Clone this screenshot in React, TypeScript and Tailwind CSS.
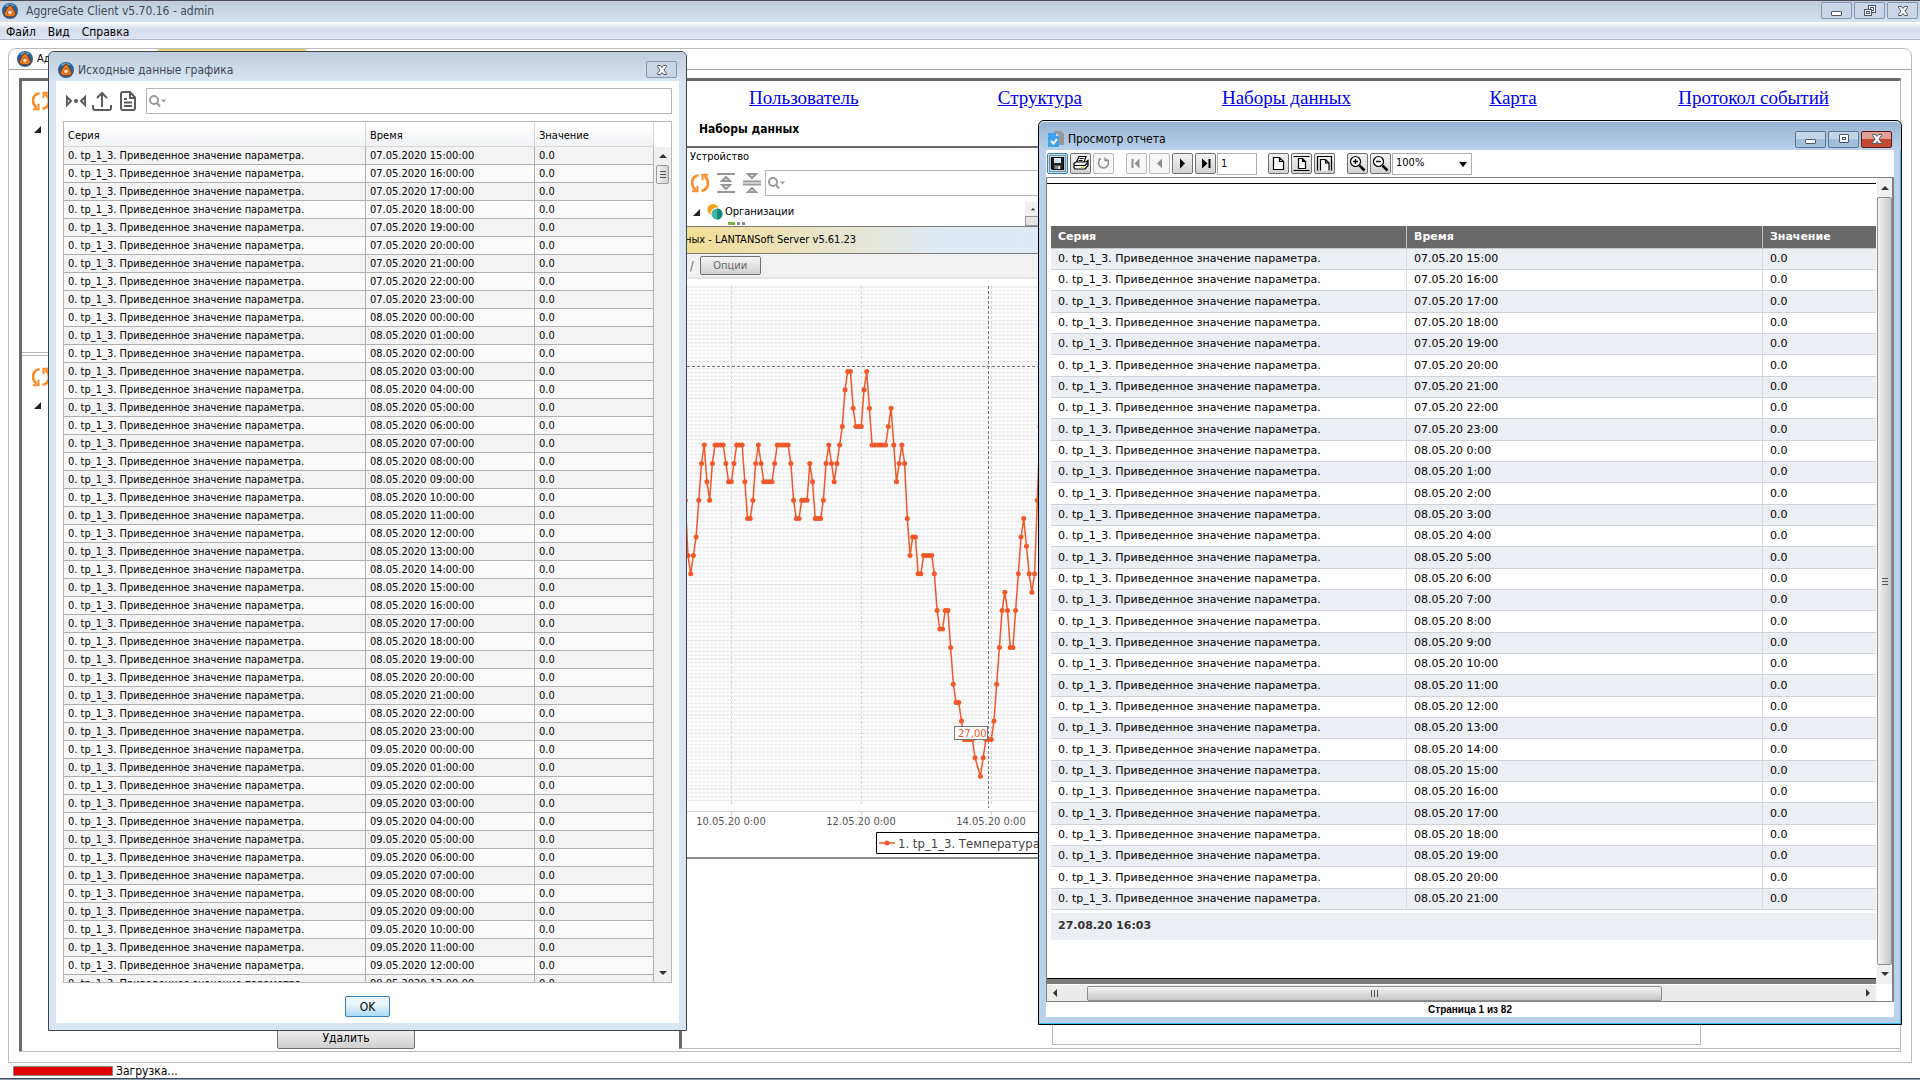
import React from "react";

const SERIES = "0. tp_1_3. Приведенное значение параметра.";
const pad = (n: number) => String(n).padStart(2, "0");
const UI = "font-['DejaVu_Sans_Condensed','DejaVu_Sans',sans-serif]";

const sourceRows = Array.from({ length: 47 }, (_, i) => {
  const h = i + 15;
  return `${pad(7 + Math.floor(h / 24))}.05.2020 ${pad(h % 24)}:00:00`;
});
const reportRows = Array.from({ length: 31 }, (_, i) => {
  const h = i + 15;
  return `${pad(7 + Math.floor(h / 24))}.05.20 ${h % 24}:00`;
});

/* Hour offset from 10.05.20 0:00 and the step below the series maximum */
const runs: [number, number, number][] = [
  [-17, -17, 7], [-16, -16, 10], [-15, -15, 11], [-14, -14, 10], [-13, -13, 9], [-12, -12, 7], [-11, -11, 5],
  [-10, -10, 4], [-9, -9, 6], [-8, -8, 7], [-7, -7, 5], [-6, -3, 4], [-2, -2, 5], [-1, 0, 6], [1, 1, 5],
  [2, 4, 4], [5, 5, 6], [6, 7, 8], [8, 8, 7], [9, 9, 5], [10, 10, 4], [11, 11, 5], [12, 15, 6], [16, 16, 5],
  [17, 21, 4], [22, 22, 5], [23, 23, 7], [24, 25, 8], [26, 28, 7], [29, 29, 5], [30, 30, 6], [31, 33, 8],
  [34, 34, 7], [35, 35, 5], [36, 36, 4], [37, 37, 5], [38, 38, 6], [39, 39, 5], [40, 40, 4], [41, 41, 3],
  [42, 42, 1], [43, 44, 0], [45, 45, 2], [46, 48, 3], [49, 49, 1], [50, 50, 0], [51, 51, 2], [52, 57, 4],
  [58, 58, 3], [59, 59, 2], [60, 60, 4], [61, 61, 6], [62, 62, 5], [63, 63, 4], [64, 64, 5], [65, 65, 8],
  [66, 66, 10], [67, 68, 9], [69, 70, 11], [71, 74, 10], [75, 75, 11], [76, 76, 13], [77, 78, 14], [79, 80, 13],
  [81, 81, 15], [82, 82, 17], [83, 84, 18], [85, 85, 19], [86, 89, 20], [90, 90, 21], [92, 92, 22], [93, 93, 21],
  [94, 96, 20], [97, 97, 19], [98, 98, 17], [99, 99, 15], [100, 100, 13], [101, 101, 12], [102, 102, 13],
  [103, 104, 15], [105, 105, 13], [106, 106, 11], [107, 107, 9], [108, 108, 8], [109, 109, 9.5],
  [110, 110, 11], [111, 111, 12], [112, 112, 11], [113, 113, 7], [114, 114, 3],
];
const points = runs.flatMap(([a, b, k]) =>
  Array.from({ length: b - a + 1 }, (_, i) => [49.3 + (a + i) * 2.708, 93.4 + k * 18.4]),
);

function Logo({ className = "size-4" }: { className?: string }) {
  return (
    <svg viewBox="0 0 16 16" className={className} aria-hidden="true">
      <circle cx="8" cy="8" r="8" fill="#2c5f92" />
      <path d="M2.500 3a7.500 7.500 0 0 1 10-.5L9 5z" fill="#4ba3d6" />
      <path d="M8 1.500c1.500 0 6.500 8.500 6 10.500-1 2.500-11 2.500-12 0C1.500 10 6.500 1.500 8 1.500z" fill="#9b3511" />
      <path d="M8 3c1.200 0 5.200 7 5 8.500-.8 2-9.200 2-10 0C2.800 10 6.800 3 8 3z" fill="#ee8420" />
      <path d="M8 5.500c.8 0 3.200 4 3 5.200-.5 1.300-5.500 1.300-6 0-.2-1.200 2.200-5.200 3-5.200z" fill="#c65a12" />
      <circle cx="8" cy="9.400" r="1.900" fill="#f9dcb4" />
    </svg>
  );
}

function Refresh() {
  return (
    <svg viewBox="0 0 18 20" className="h-5 w-[18px] shrink-0" fill="none" stroke="#ff8a24" strokeWidth="2.6" aria-hidden="true">
      <path d="M7.5 2.2C-.5 3.5-.5 13 4.6 17" />
      <path d="M10.500 17.800C18.500 16.500 18.500 7 13.400 3" />
      <path d="M1 18.200h5.500v-5.500M17 1.800h-5.500v5.500" strokeWidth="2" />
    </svg>
  );
}

function Search() {
  return (
    <svg viewBox="0 0 18 12" className="absolute top-[7px] left-[3px] h-3 w-[18px]" fill="none" stroke="#9a9a9a" strokeWidth="2" aria-hidden="true">
      <circle cx="5" cy="5" r="4" />
      <path d="m8 8 3 3.500" />
      <path d="M12 4.500h5l-2.500 3z" fill="#9a9a9a" stroke="none" />
    </svg>
  );
}

function Arrow({ dir }: { dir: "up" | "down" | "left" | "right" }) {
  const d = { up: "M0 6 4 2l4 4z", down: "M0 2h8L4 6z", left: "M6 0v8L2 4z", right: "M2 0v8l4-4z" }[dir];
  return (
    <svg viewBox="0 0 8 8" className="size-2" aria-hidden="true">
      <path d={d} fill="#333" />
    </svg>
  );
}

function Branch() {
  return (
    <svg viewBox="0 0 7 7" className="size-[7px]" aria-hidden="true">
      <path d="M7 0v7H0z" fill="#222" />
    </svg>
  );
}

function Glyph({ kind }: { kind: "min" | "max" | "restore" | "close" }) {
  return (
    <svg viewBox="0 0 14 12" className="h-3 w-[14px]" fill="none" stroke="#4d566b" strokeWidth="1" aria-hidden="true">
      {kind === "min" && <rect x="1.500" y="6.500" width="10" height="4" rx=".5" fill="#fff" />}
      {kind === "max" && (
        <>
          <rect x="2.500" y="1.500" width="9" height="8" rx=".5" fill="#fff" />
          <rect x="5.500" y="4.500" width="3" height="2" />
        </>
      )}
      {kind === "restore" && (
        <>
          <rect x="5.500" y=".5" width="7" height="7" fill="#fff" />
          <rect x="7.500" y="2.500" width="3" height="3" />
          <rect x="1.500" y="4.500" width="7" height="6" fill="#fff" />
          <rect x="3.500" y="6.500" width="3" height="2" />
        </>
      )}
      {kind === "close" && (
        <path d="M2.500 1.500h3L7 3.500l1.500-2h3v1L9 6l2.500 3.500v1h-3L7 8.500l-1.500 2h-3v-1L5 6 2.500 2.500z" fill="#fff" />
      )}
    </svg>
  );
}

function WinButton({ kind, label, tone = "pale" }: { kind: "min" | "max" | "restore" | "close"; label: string; tone?: "pale" | "blue" | "red" }) {
  const tones = {
    pale: "border-[#8595b3] bg-[#c8d6e5]",
    blue: "border-[#5a7596] bg-linear-to-b from-[#c3d5e9] from-50% to-[#a3bedb] to-50%",
    red: "border-[#5b1a1c] bg-linear-to-b from-[#e0a095] from-50% to-[#c24a33] to-50%",
  };
  return (
    <button aria-label={label} className={`flex h-[17px] w-[31px] items-center justify-center rounded-xs border ${tones[tone]}`}>
      <Glyph kind={kind} />
    </button>
  );
}

function Grip({ vertical = false }: { vertical?: boolean }) {
  return (
    <span className={`flex gap-[2px] ${vertical ? "flex-col" : ""}`}>
      {[0, 1, 2].map((i) => (
        <span key={i} className={vertical ? "h-px w-[6px] bg-[#555]" : "h-[7px] w-px bg-[#555]"} />
      ))}
    </span>
  );
}

function SourceWindow() {
  return (
    <section aria-label="Исходные данные графика" className="absolute top-[51px] left-12 flex h-[980px] w-[639px] flex-col rounded-t-md border border-[#3f4550] bg-[#d7e4f1] px-[7px] pb-[7px]">
      <header className="-mx-[7px] flex h-[29px] shrink-0 items-center rounded-t-md bg-linear-to-b from-[#bfcddc] to-[#d7e4f1] px-[9px] pt-[6px]">
        <Logo />
        <h2 className="ml-1 flex-1 text-xs text-[#3f4a5a]">Исходные данные графика</h2>
        <WinButton kind="close" label="Закрыть" />
      </header>
      <div className="flex min-h-0 flex-1 flex-col bg-white px-[7px] pt-[7px]">
        <div className="flex items-center">
          <button aria-label="Сжать" className="ml-[2px]">
            <svg viewBox="0 0 22 12" className="h-3 w-[22px]" fill="none" stroke="#5c5c5c" strokeWidth="2" aria-hidden="true">
              <path d="M2 2v8l4-4zM20 2v8l-4-4z" />
              <circle cx="11" cy="6" r="2" fill="#5c5c5c" stroke="none" />
            </svg>
          </button>
          <button aria-label="Экспорт" className="ml-[5px]">
            <svg viewBox="0 0 20 20" className="size-5" fill="none" stroke="#5c5c5c" strokeWidth="2" aria-hidden="true">
              <path d="M10 16V2M5 7l5-5 5 5M1 14v3q0 2 2 2h14q2 0 2-2v-3" />
            </svg>
          </button>
          <button aria-label="Отчет" className="ml-2">
            <svg viewBox="0 0 16 20" className="h-5 w-4" fill="none" stroke="#5c5c5c" strokeWidth="2" aria-hidden="true">
              <path d="M3 1h7l5 5.500V17q0 2-2 2H3q-2 0-2-2V3q0-2 2-2zM10 1v6h5M4 8h3M4 11.500h8M4 15h8" />
            </svg>
          </button>
          <div className="relative ml-[10px] flex-1">
            <Search />
            <input aria-label="Поиск" className="block h-[26px] w-full border border-[#b5b5b5] bg-transparent pl-6 text-xs outline-none" />
          </div>
        </div>
        <div className="mt-[7px] h-[862px] overflow-hidden border border-[#b8b8b8]">
          <div className="flex">
            <table className="flex-1 table-fixed border-separate border-spacing-0 text-[11px]">
              <colgroup>
                <col className="w-[302px]" />
                <col className="w-[169px]" />
                <col />
              </colgroup>
              <thead>
                <tr className="h-[25px] bg-linear-to-b from-white to-[#f1f2f4] text-left">
                  {["Серия", "Время", "Значение"].map((t) => (
                    <th key={t} className="border-r border-b border-[#d5d5d5] px-1 pt-1 font-normal">{t}</th>
                  ))}
                </tr>
              </thead>
              <tbody>
                {sourceRows.map((t) => (
                  <tr key={t} className="h-[18px] odd:bg-[#f3f3f3] even:bg-[#fafafa]">
                    {[SERIES, t, "0.0"].map((v, c) => (
                      <td key={c} className="border-r border-b border-[#b0b0b0] px-1 py-0 leading-[17px] whitespace-nowrap">{v}</td>
                    ))}
                  </tr>
                ))}
              </tbody>
            </table>
            <div className="mt-[25px] flex h-[835px] w-[17px] flex-col items-center bg-[#f0f0f0] py-[5px]">
              <Arrow dir="up" />
              <div className="mt-[5px] flex h-[19px] w-[13px] items-center justify-center rounded-xs border border-[#999] bg-linear-to-r from-[#f5f5f5] to-[#cfcfcf]">
                <Grip vertical />
              </div>
              <span className="flex-1" />
              <Arrow dir="down" />
            </div>
          </div>
        </div>
        <button className="mx-auto mt-[13px] h-[21px] w-[45px] rounded-xs border border-[#3c7fb1] bg-linear-to-b from-[#e9f6fd] from-40% to-[#a9daf5] text-xs leading-none">OK</button>
      </div>
    </section>
  );
}

function ToolButton({ label, active, disabled, children }: { label: string; active?: boolean; disabled?: boolean; children: React.ReactNode }) {
  return (
    <button
      aria-label={label}
      disabled={disabled}
      className={`mr-[2px] flex size-[21px] items-center justify-center rounded-xs border ${
        disabled ? "border-[#b9b9b9] bg-[#f6f6f6] text-[#8f8f8f]" : active ? "border-[#3c7fb1] bg-[#bfe3f7] text-black" : "border-[#707070] bg-linear-to-b from-[#f4f4f4] to-[#d2d2d2] text-black"
      }`}
    >
      <svg viewBox="0 0 17 17" className="size-[17px]" fill="none" stroke="currentColor" strokeWidth="1.200" aria-hidden="true">
        {children}
      </svg>
    </button>
  );
}

function ReportWindow() {
  return (
    <section aria-label="Просмотр отчета" className="absolute top-[120px] right-[18px] left-[1038px] flex h-[905px] flex-col rounded-t-md border border-black bg-[#b9d1ea] px-[7px] pb-[7px] shadow-[inset_-1px_-1px_0_#35c4e8]">
      <header className="-mx-[7px] flex h-[29px] shrink-0 items-center gap-[2px] rounded-t-md border-t border-[#e6eef7] bg-linear-to-b from-[#98b4d2] to-[#b9d1ea] pr-[9px] pl-[9px] pt-[6px]">
        <svg viewBox="0 0 16 16" className="size-4" aria-hidden="true">
          <path d="M6 0h7l3 3v11H6z" fill="#9c9696" />
          <path d="M0 2h8l3 3v11H0z" fill="#3fa2ee" />
          <path d="M8 2v3h3z" fill="#b9dcf8" />
          <path d="m3 10 2.500 2.500L9 8" fill="none" stroke="#fff" strokeWidth="2" />
        </svg>
        <h2 className="ml-[2px] flex-1 text-xs text-black">Просмотр отчета</h2>
        <WinButton kind="min" label="Свернуть" tone="blue" />
        <WinButton kind="max" label="Развернуть" tone="blue" />
        <WinButton kind="close" label="Закрыть" tone="red" />
      </header>
      <div className="flex min-h-0 flex-1 flex-col bg-white">
        <div className="flex h-[27px] shrink-0 items-center pl-px">
          <ToolButton label="Сохранить" active>
            <rect x=".5" y=".5" width="16" height="16" stroke="#333" strokeWidth="1" strokeDasharray="1 1" />
            <path d="M2.500 2.500h12v12h-11l-1-1z" fill="#222" />
            <path d="M5 3h7v5H5z" fill="#cfe6f5" stroke="none" />
            <path d="M5.500 10.500h6V14h-6z" fill="#888" stroke="none" />
            <path d="M9.500 11h1.500v3H9.500z" fill="#fff" stroke="none" />
          </ToolButton>
          <ToolButton label="Печать">
            <path d="M4.500 7 7 1.500h7L12 7M2 8.500 4 7h10l2-1.500v5L13 14H3l-1-1.500zM2 10.500h11l3-3M7.500 3.500h4M6.500 5.500h4" fill="#fff" />
            <path d="M9 12.300h3" stroke="#d6d21a" strokeWidth="1.500" />
          </ToolButton>
          <ToolButton label="Обновить" disabled>
            <path d="M5.500 4a5 5 0 1 0 6 0M10 2.500v3h4M3.500 4H6" strokeWidth="1.500" />
          </ToolButton>
          <span className="w-[10px]" />
          <ToolButton label="Первая страница" disabled>
            <path d="M4.500 4v9" strokeWidth="2" />
            <path d="M11.500 3.500v10l-5-5z" fill="currentColor" stroke="none" />
          </ToolButton>
          <ToolButton label="Предыдущая страница" disabled>
            <path d="M11 3.500v10l-5-5z" fill="currentColor" stroke="none" />
          </ToolButton>
          <ToolButton label="Следующая страница">
            <path d="M6 3.500v10l5-5z" fill="currentColor" stroke="none" />
          </ToolButton>
          <ToolButton label="Последняя страница">
            <path d="M12.500 4v9" strokeWidth="2" />
            <path d="M5 3.500v10l5.500-5z" fill="currentColor" stroke="none" />
          </ToolButton>
          <input aria-label="Страница" defaultValue="1" className="-ml-px mr-[11px] h-[22px] w-10 border border-[#b0b0b0] px-[3px] text-[11px] outline-none" />
          <ToolButton label="Реальный размер">
            <path d="M3.500 2.500h6l4 4v8h-10zM9.500 2.500v4h4" fill="#fff" />
          </ToolButton>
          <ToolButton label="По странице">
            <path d="M.5 1.500h16M.5 15.500h16" />
            <path d="M5.500 3.500h4l3 3v7h-7zM9.500 3.500v3h3" fill="#fff" />
          </ToolButton>
          <ToolButton label="По ширине">
            <path d="M1.500 15.500v-14h14v14" />
            <path d="M4.500 15.500v-11h5l3.500 3.500v7.500M9.500 4.500V8H13" fill="#fff" />
          </ToolButton>
          <span className="w-[10px]" />
          <ToolButton label="Увеличить">
            <circle cx="6.500" cy="6.500" r="5" fill="#fff" />
            <path d="M4 6.500h5M6.500 4v5" strokeWidth="1.500" />
            <path d="m10.500 10.500 5 5" strokeWidth="2.500" />
          </ToolButton>
          <ToolButton label="Уменьшить">
            <circle cx="6.500" cy="6.500" r="5" fill="#fff" />
            <path d="M4 6.500h5" strokeWidth="1.500" />
            <path d="m10.500 10.500 5 5" strokeWidth="2.500" />
          </ToolButton>
          <div className="relative -ml-px">
            <select aria-label="Масштаб" className="block h-[22px] w-20 appearance-none border border-[#b0b0b0] px-[3px] text-[11px] outline-none">
              <option>100%</option>
            </select>
            <svg viewBox="0 0 8 5" className="absolute top-[9px] right-[5px] h-[5px] w-2" aria-hidden="true">
              <path d="M0 0h8L4 5z" />
            </svg>
          </div>
        </div>
        <div className="flex min-h-0 flex-1 flex-col border border-r-2 border-[#828282]">
          <div className="flex min-h-0 flex-1">
            <div className="flex flex-1 flex-col pt-[5px] font-['DejaVu_Sans',sans-serif]">
              <div className="flex-1 border-y border-black pt-[42px] pl-1">
                <table className="w-full table-fixed border-separate border-spacing-0 text-[11px]">
                  <colgroup>
                    <col className="w-[356px]" />
                    <col className="w-[356px]" />
                    <col />
                  </colgroup>
                  <thead>
                    <tr className="h-[23px] bg-[#686868] text-left text-white">
                      {["Серия", "Время", "Значение"].map((t) => (
                        <th key={t} className="border-b border-b-[#c8c8c8] px-[7px] py-0 font-bold not-last:border-r not-last:border-r-[#c4c4c4]">{t}</th>
                      ))}
                    </tr>
                  </thead>
                  <tbody>
                    {reportRows.map((t) => (
                      <tr key={t} className="h-[21px] odd:bg-[#ebeef3] nth-[3n]:h-[22px]">
                        {[SERIES, t, "0.0"].map((v, c) => (
                          <td key={c} className="border-b border-b-[#cfd2d6] px-[7px] py-0 leading-5 whitespace-nowrap not-last:border-r not-last:border-r-[#d8dade]">{v}</td>
                        ))}
                      </tr>
                    ))}
                  </tbody>
                </table>
                <p className="mt-[3px] h-[27px] bg-[#ebeef3] px-[7px] text-[11px] leading-[26px] font-bold text-[#333]">27.08.20 16:03</p>
              </div>
              <div className="h-[5px] bg-[#7c7c7c]" />
            </div>
            <div className="ml-px flex w-[15px] flex-col items-center bg-[#f0f0f0] py-[6px]">
              <Arrow dir="up" />
              <div className="my-[5px] flex w-[15px] flex-1 items-center justify-center rounded-xs border border-[#8f8f8f] bg-linear-to-r from-[#f4f4f4] to-[#c6c6c6]">
                <Grip vertical />
              </div>
              <Arrow dir="down" />
            </div>
          </div>
          <div className="mt-px mr-[16px] flex h-4 shrink-0 items-center bg-[#ebebeb] px-1">
            <Arrow dir="left" />
            <div className="ml-7 flex h-[15px] w-[575px] items-center justify-center rounded-xs border border-[#8f8f8f] bg-linear-to-b from-[#f4f4f4] to-[#c6c6c6]">
              <Grip />
            </div>
            <span className="flex-1" />
            <Arrow dir="right" />
          </div>
        </div>
        <p className="h-[15px] shrink-0 text-center font-['Liberation_Sans',sans-serif] text-[10px] leading-4 font-bold">Страница 1 из 82</p>
      </div>
    </section>
  );
}

function Chart() {
  const grid = Array.from({ length: 139 }, (_, i) => 9 + i * 3.72);
  return (
    <svg viewBox="0 0 370 579" className="h-[579px] w-[370px]" aria-label="График температуры" fontFamily="DejaVu Sans Condensed, DejaVu Sans, sans-serif">
      <rect width="370" height="579" fill="#fff" />
      <rect x="0" y="8" width="370" height="522" fill="#fcfcfc" />
      {grid.map((y, i) => (
        <path key={i} d={`M0 ${y}H370`} stroke={i % 5 === 0 ? "#dcdcdc" : "#e6e6e6"} strokeDasharray="3 1" />
      ))}
      {[49.5, 179.5, 309.5].map((x) => (
        <path key={x} d={`M${x} 8V526`} stroke="#d6d6d6" strokeDasharray="3 2" />
      ))}
      <path d="M0 .5H370" stroke="#e4e4e4" />
      <path d="M0 88.500H370M306.500 8V530" stroke="#777" strokeDasharray="3 2" />
      <path d="M0 533.500H370M49.500 534v3M179.500 534v3M309.500 534v3" stroke="#d0d4d8" />
      <polyline points={points.map((p) => p.join(",")).join(" ")} fill="none" stroke="#f0582a" strokeWidth="1.500" />
      {points.map(([x, y]) => (
        <circle key={x} cx={x} cy={y} r="2.500" fill="#f0582a" />
      ))}
      <rect x="272.500" y="448.500" width="33" height="13" fill="#fff" stroke="#777" />
      <text x="276" y="459" fontSize="10" fill="#f0582a" fontFamily="DejaVu Sans">27,00</text>
      {["10.05.20 0:00", "12.05.20 0:00", "14.05.20 0:00"].map((t, i) => (
        <text key={t} x={49 + i * 130} y="547" fontSize="11" fill="#555" textAnchor="middle">{t}</text>
      ))}
      <path d="M194.500 554.500H380V575.500H194.500z" fill="#fff" stroke="#000" />
      <path d="M197 565h16" stroke="#f0582a" strokeWidth="1.500" />
      <circle cx="205" cy="565" r="2.500" fill="#f0582a" />
      <text x="216" y="570" fontSize="13" fill="#444">1. tp_1_3. Температура.</text>
    </svg>
  );
}

function RightPane() {
  return (
    <div className="flex flex-1 flex-col">
      <div className="mb-[2px] flex flex-1 flex-col border-b border-l-[3px] border-b-[#b9bbbe] border-l-[#6a6a6a]">
        <nav className="grid h-[34px] grid-cols-[243fr_228fr_264fr_188fr_292fr] items-center text-center font-['Liberation_Serif',serif] text-[19px] text-[#0000ee] underline">
          {["Пользователь", "Структура", "Наборы данных", "Карта", "Протокол событий"].map((t) => (
            <a key={t} href="#">{t}</a>
          ))}
        </nav>
        <h1 className="h-[31px] pl-[17px] text-xs leading-7 font-bold">Наборы данных</h1>
        <div className="flex flex-1">
          <div className="w-[370px] shrink-0 border-t-2 border-[#6a6a6a]">
            <p className="h-[21px] pl-2 text-[11px] leading-[17px]">Устройство</p>
            <div className="flex h-[27px] items-center pl-[9px]">
              <Refresh />
              <svg viewBox="0 0 44 20" className="ml-2 h-5 w-11 shrink-0" fill="none" stroke="#979797" strokeWidth="2" aria-hidden="true">
                <path d="M0 1h18M0 19h18M5 8l4-4 4 4zM5 12l4 4 4-4zM26 8.500h18M26 11.500h18M31 1h8l-4 4zM31 19h8l-4-4z" />
              </svg>
              <div className="relative ml-1 flex-1">
                <Search />
                <input aria-label="Поиск устройства" className="block h-[26px] w-full border border-[#b5b5b5] pl-6 text-xs outline-none" />
              </div>
            </div>
            <div className="flex h-[30px] overflow-hidden">
              <div className="flex-1 pt-[7px] pl-[11px]">
                <div className="flex h-[18px] items-center text-[11px]">
                  <Branch />
                  <svg viewBox="0 0 16 16" className="mr-[2px] ml-[7px] size-4" aria-hidden="true">
                    <circle cx="6" cy="5.500" r="5.500" fill="#f9a11b" />
                    <circle cx="10" cy="10" r="6.500" fill="#fff" />
                    <circle cx="10" cy="10" r="5.500" fill="#45b5a5" />
                    <path d="M10 4.500a5.500 5.500 0 0 1 0 11z" fill="#0c8a78" />
                  </svg>
                  Организации
                </div>
                <div className="mt-px flex h-[3px] gap-[2px] pl-[35px]">
                  <span className="w-[7px] bg-[#7cb342]" />
                  <span className="w-[3px] bg-[#888]" />
                  <span className="w-[3px] bg-[#888]" />
                </div>
              </div>
              <div className="mr-[11px] mt-[6px] flex w-4 flex-col items-center bg-[#f0f0f0] pt-[5px]">
                <Arrow dir="up" />
                <div className="mt-[5px] h-4 w-4 border border-[#999] bg-[#e4e4e4]" />
              </div>
            </div>
            <p className="h-7 border-y border-[#7b7b7b] bg-linear-to-r from-[#f3dd92] to-[#e0e9f4] to-70% pl-[3px] text-[11px] leading-[26px] whitespace-nowrap">ных - LANTANSoft Server v5.61.23</p>
            <div className="flex h-6 items-center gap-[6px] border-b border-[#e2e2e2] bg-[#f1f1f1] pl-2 text-xs text-[#666]">
              /
              <button className="h-[19px] w-[61px] rounded-xs border border-[#707070] bg-linear-to-b from-[#f4f4f4] to-[#d2d2d2] text-[11px] leading-none">Опции</button>
            </div>
            <div className="border-b-2 border-[#8a8f88]">
              <Chart />
            </div>
          </div>
          <div className="mb-[3px] w-[649px] border border-t-0 border-[#b9bbbe]" />
        </div>
      </div>
    </div>
  );
}

function LeftPane() {
  return (
    <div className="flex w-[660px] shrink-0 flex-col border-l-[3px] border-[#6a6a6a]">
      <div className="h-[271px] pt-[10px] pl-[10px]">
        <Refresh />
        <div className="mt-[15px] ml-[2px]"><Branch /></div>
      </div>
      <div className="flex flex-1 flex-col border-t-4 border-double border-[#b5b5b5] pt-[11px] pl-[10px]">
        <Refresh />
        <div className="mt-[15px] ml-[2px] flex-1"><Branch /></div>
        <button className="mb-[2px] ml-[245px] h-[23px] w-[138px] rounded-xs border border-[#707070] bg-linear-to-b from-[#f4f4f4] to-[#cfcfcf] text-xs">Удалить</button>
      </div>
    </div>
  );
}

export default function App() {
  return (
    <div className={`relative flex h-screen flex-col overflow-hidden bg-white text-black ${UI}`}>
      <header className="flex h-[22px] shrink-0 items-center gap-[2px] border-t border-[#4a4d55] bg-linear-to-b from-[#bdcbda] to-[#d6e2ee] px-[2px] pb-[2px]">
        <Logo />
        <span className="ml-[6px] flex-1 text-xs text-[#3f4a5a]">AggreGate Client v5.70.16 - admin</span>
        <WinButton kind="min" label="Свернуть окно" />
        <WinButton kind="restore" label="Восстановить окно" />
        <WinButton kind="close" label="Закрыть окно" />
      </header>
      <nav className="flex h-[18px] shrink-0 items-center gap-3 border-b border-[#b4b9cb] bg-linear-to-b from-white via-[#d5ddee] via-40% to-[#dee3f3] px-[6px] pt-[2px] text-xs">
        <button>Файл</button>
        <button>Вид</button>
        <button>Справка</button>
      </nav>
      <main className="mx-2 mt-2 flex min-h-0 flex-1 flex-col rounded-t-lg border border-[#b9bbbe]">
        <div className="flex h-[21px] shrink-0 border-b border-[#a5a5a5] pl-2">
          <div className="flex w-[140px] items-center gap-1 text-[11px]"><Logo />Ад</div>
          <div className="h-[3px] w-[150px] rounded-t bg-[#e9cf6d]" />
        </div>
        <div className="mx-[10px] mt-2 mb-[10px] flex min-h-0 flex-1 border-t-[3px] border-r border-b border-t-[#6a6a6a] border-r-[#b9bbbe] border-b-[#b9bbbe]">
          <LeftPane />
          <RightPane />
        </div>
      </main>
      <footer className="flex h-[15px] shrink-0 items-center gap-[3px] pt-px pl-[13px] text-xs">
        <div role="progressbar" aria-label="Загрузка" className="h-[10px] w-[100px] border border-[#888] bg-[#e00000]" />
        Загрузка...
      </footer>
      <div className="h-[2px] shrink-0 border-t border-[#3f4a5a] bg-[#8fa0b3]" />
      <SourceWindow />
      <ReportWindow />
    </div>
  );
}
